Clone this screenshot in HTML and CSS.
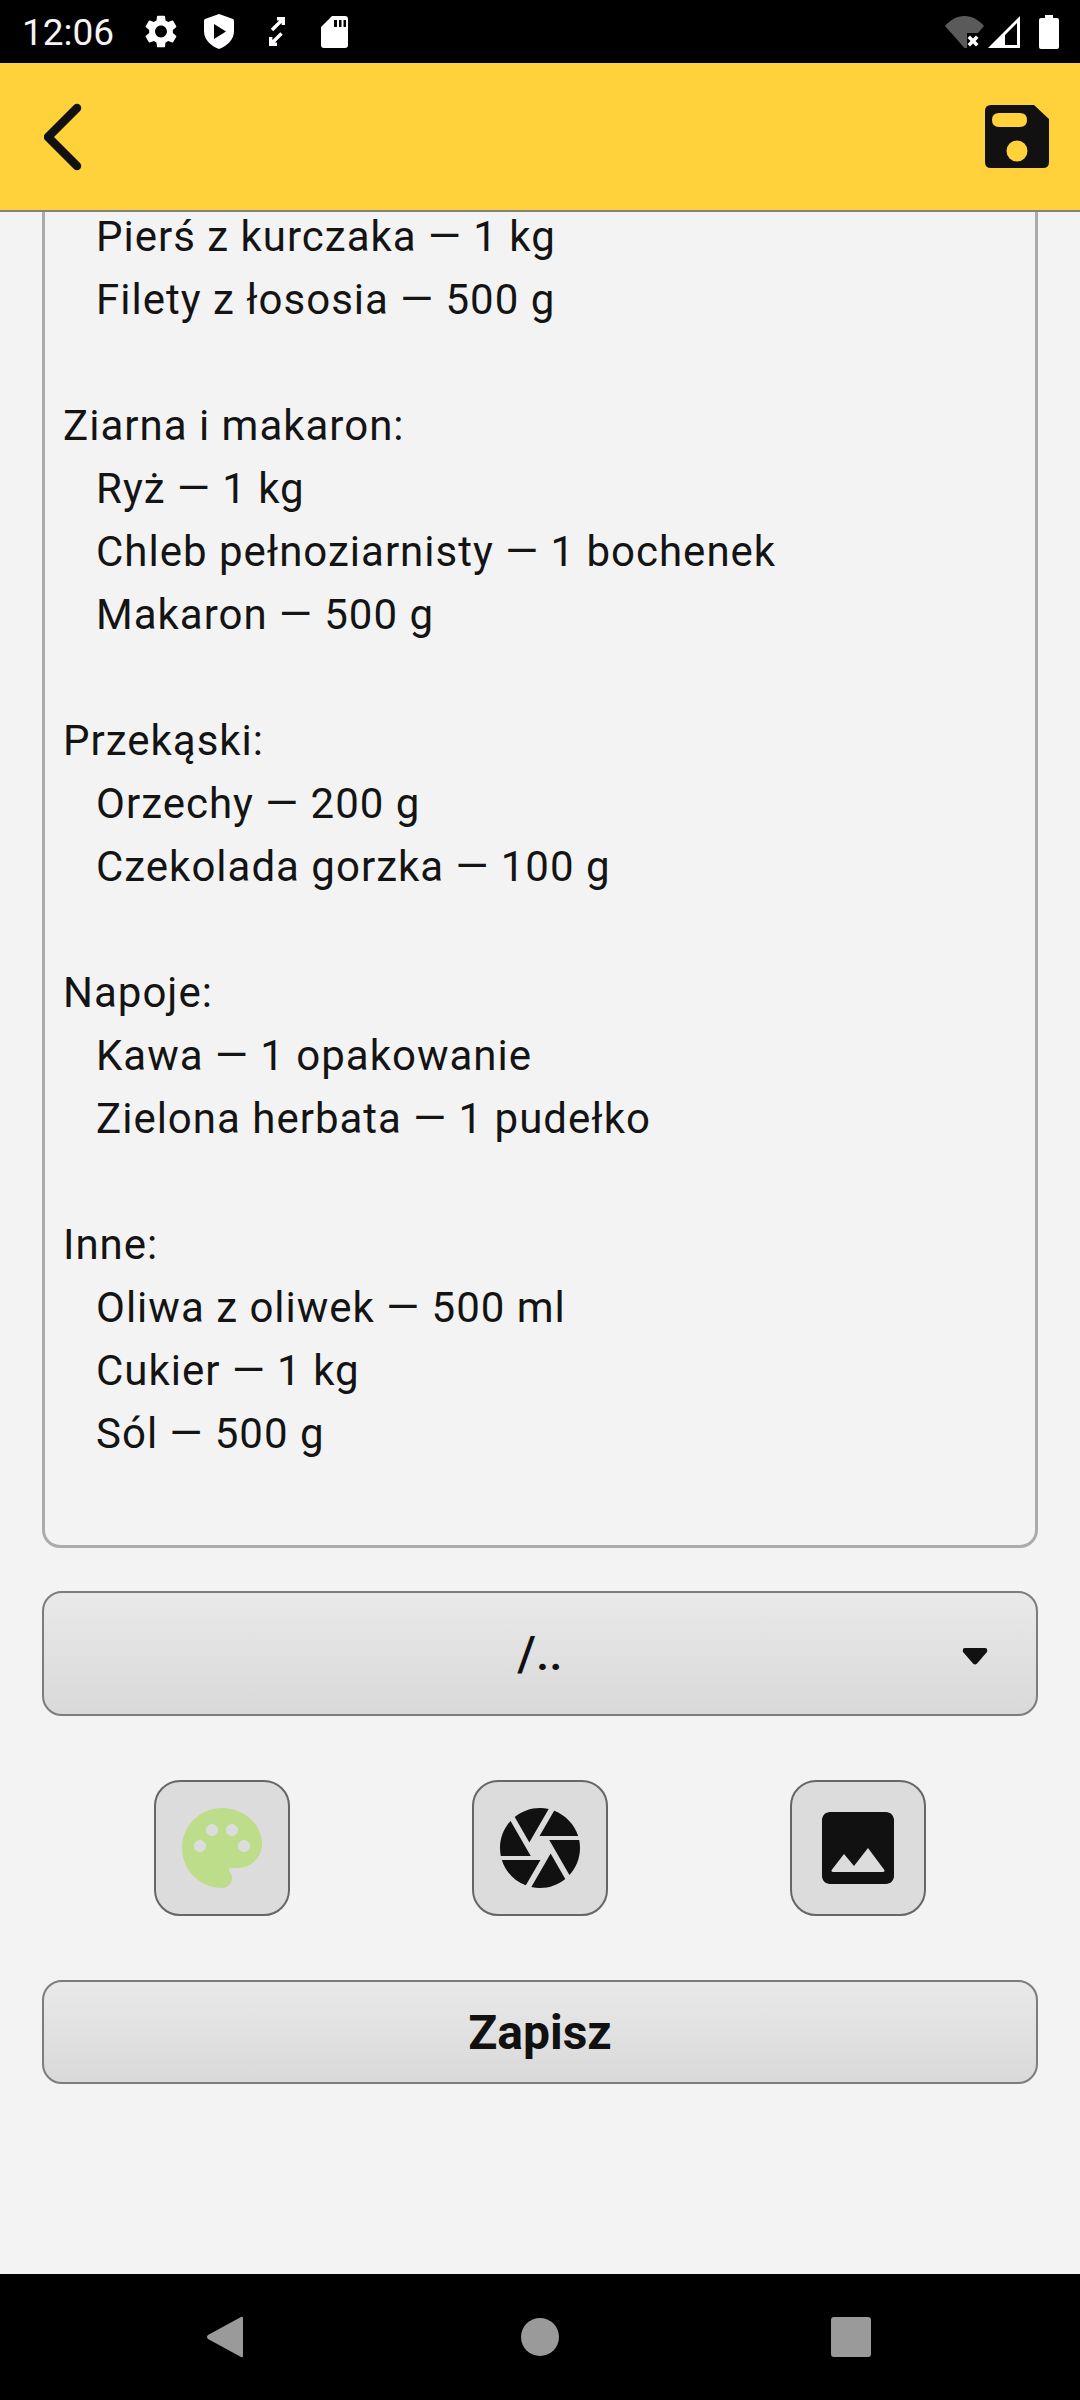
FILE: index.html
```html
<!DOCTYPE html>
<html lang="pl">
<head>
<meta charset="utf-8">
<title>Zapisz</title>
<link rel="stylesheet" href="styles.css">
</head>
<body>
<div class="screen">
  <header class="status">
    <span class="time">12:06</span>
    <svg class="st st-gear" viewBox="2.4 2 19.2 20"><path d="M19.14 12.94c.04-.3.06-.61.06-.94 0-.32-.02-.64-.07-.94l2.03-1.58c.18-.14.23-.41.12-.61l-1.92-3.32c-.12-.22-.37-.29-.59-.22l-2.39.96c-.5-.38-1.03-.7-1.62-.94L14.4 2.81c-.04-.24-.24-.41-.48-.41h-3.84c-.24 0-.43.17-.47.41L9.25 5.35c-.59.24-1.13.57-1.62.94l-2.39-.96c-.22-.08-.47 0-.59.22L2.74 8.87c-.12.21-.08.47.12.61l2.03 1.58c-.05.3-.09.63-.09.94s.02.64.07.94l-2.03 1.58c-.18.14-.23.41-.12.61l1.92 3.32c.12.22.37.29.59.22l2.39-.96c.5.38 1.03.7 1.62.94l.36 2.54c.05.24.24.41.48.41h3.84c.24 0 .44-.17.47-.41l.36-2.54c.59-.24 1.13-.56 1.62-.94l2.39.96c.22.08.47 0 .59-.22l1.92-3.32c.12-.22.07-.47-.12-.61l-2.01-1.58zM12 15.6c-1.98 0-3.6-1.62-3.6-3.6s1.62-3.6 3.6-3.6 3.6 1.62 3.6 3.6-1.62 3.6-3.6 3.6z"/></svg>
    <svg class="st st-shield" viewBox="0 0 30 35"><path fill-rule="evenodd" d="M15 0 L29 5 Q30 5.400 30 7 V17 C30 26 23 32 15 35 C7 32 0 26 0 17 V7 Q0 5.400 1 5 Z M10 10 V25 L22 17.500 Z"/></svg>
    <svg class="st st-arrows" viewBox="0 0 16 29"><path class="arrow-line" d="M8 1.700H14.300V8M14.300 1.700 3 13"/><path class="arrow-line" d="M1.700 20V27.300H8M1.700 27.300 12.500 16.500"/></svg>
    <svg class="st st-sd" viewBox="0 0 27 32"><path fill-rule="evenodd" d="M11 0H24Q27 0 27 3V29Q27 32 24 32H3Q0 32 0 29V11ZM13 4V11H16V4ZM18 4V11H20.500V4ZM22.500 4V11H25V4Z"/></svg>
    <span class="status-gap"></span>
    <svg class="st st-wifi" viewBox="0 0 39 32"><path class="dim" d="M19.500 32 0 10C5 4 12 0 19.500 0S34 4 39 10L33 17H22V32Z"/><path d="M25 19.500 28 22.500 31 19.500 33.500 22 30.500 25 33.500 28 31 30.500 28 27.500 25 30.500 22.500 28 25.500 25 22.500 22Z"/></svg>
    <svg class="st st-signal" viewBox="0 0 32 32"><path fill-rule="evenodd" d="M32 0V32H0ZM29 7 17 19V29H29Z"/></svg>
    <svg class="st st-battery" viewBox="0 0 20 34"><path d="M6 0H14V3H18Q20 3 20 5V32Q20 34 18 34H2Q0 34 0 32V5Q0 3 2 3H6Z"/></svg>
  </header>

  <nav class="appbar">
    <svg class="back" viewBox="0 0 40 70"><path d="M33 6 4 35 33 64"/></svg>
    <svg class="save" viewBox="0 0 64 64"><path fill-rule="evenodd" d="M6 0H49L64 14V57Q64 63 58 63H6Q0 63 0 57V6Q0 0 6 0ZM14 8Q7 8 7 15T14 22H35Q42 22 42 15T35 8ZM32 35.500A10.500 10.500 0 1 0 32 56.500 10.500 10.500 0 1 0 32 35.500Z"/></svg>
  </nav>

  <main class="content">
    <div class="note">
      <section class="group">
        <p class="item">Pierś z kurczaka — 1 kg</p>
        <p class="item">Filety z łososia — 500 g</p>
      </section>
      <section class="group">
        <p class="head">Ziarna i makaron:</p>
        <p class="item">Ryż — 1 kg</p>
        <p class="item">Chleb pełnoziarnisty — 1 bochenek</p>
        <p class="item">Makaron — 500 g</p>
      </section>
      <section class="group">
        <p class="head">Przekąski:</p>
        <p class="item">Orzechy — 200 g</p>
        <p class="item">Czekolada gorzka — 100 g</p>
      </section>
      <section class="group">
        <p class="head">Napoje:</p>
        <p class="item">Kawa — 1 opakowanie</p>
        <p class="item">Zielona herbata — 1 pudełko</p>
      </section>
      <section class="group">
        <p class="head">Inne:</p>
        <p class="item">Oliwa z oliwek — 500 ml</p>
        <p class="item">Cukier — 1 kg</p>
        <p class="item">Sól — 500 g</p>
      </section>
    </div>

    <div class="select">
      <span class="select-value">/..</span>
      <svg class="select-arrow" viewBox="0 0 26 17"><path d="M3 0H23Q26 0 25 4L15 15.500Q13 17.500 11 15.500L1 4Q0 0 3 0Z"/></svg>
    </div>

    <div class="tools">
      <div class="tool">
        <svg class="tool-icon" viewBox="0 0 24 24"><path class="palette" d="M12 2C6.490 2 2 6.490 2 12s4.490 10 10 10c1.380 0 2.500-1.120 2.500-2.500 0-.61-.23-1.200-.64-1.670-.08-.1-.13-.21-.13-.33 0-.28.22-.5.5-.5H16c3.310 0 6-2.690 6-6 0-4.960-4.490-9-10-9zm-5.500 11c-.83 0-1.500-.67-1.500-1.500S5.670 10 6.500 10s1.500.67 1.500 1.500S7.330 13 6.500 13zm3-4C8.670 9 8 8.330 8 7.500S8.670 6 9.500 6s1.500.67 1.500 1.500S10.330 9 9.500 9zm5 0c-.83 0-1.500-.67-1.500-1.500S13.670 6 14.500 6s1.500.67 1.500 1.500S15.330 9 14.500 9zm3 4c-.83 0-1.500-.67-1.500-1.500s.67-1.500 1.500-1.500 1.500.67 1.500 1.500-.67 1.500-1.500 1.500z"/></svg>
      </div>
      <div class="tool">
        <svg class="tool-icon" viewBox="0 0 24 24"><path d="M9.400 10.500l4.770-8.260C13.470 2.090 12.750 2 12 2c-2.400 0-4.600.85-6.320 2.250l3.660 6.350.06-.1zM21.540 9c-.92-2.920-3.150-5.260-6-6.340L11.880 9h9.660zm.26 1h-7.490l.29.5 4.760 8.250C21 16.970 22 14.610 22 12c0-.69-.07-1.350-.2-2zM8.540 12l-3.900-6.750C3.010 7.030 2 9.390 2 12c0 .69.07 1.350.2 2h7.490l-1.150-2zm-6.080 3c.92 2.920 3.150 5.260 6 6.340L12.120 15H2.460zm11.270 0l-3.900 6.760c.7.15 1.420.24 2.170.24 2.400 0 4.600-.85 6.320-2.250l-3.660-6.350-.93 1.600z"/></svg>
      </div>
      <div class="tool">
        <svg class="tool-icon" viewBox="0 0 24 24"><path fill-rule="evenodd" d="M21 19V5c0-1.100-.9-2-2-2H5c-1.100 0-2 .9-2 2v14c0 1.100.9 2 2 2h14c1.100 0 2-.9 2-2zM8.500 13.500l2.500 3.010L14.500 12l4 5.400q.4.6-.3.6H5.800q-.7 0-.3-.6z"/></svg>
      </div>
    </div>

    <button class="submit" type="button">Zapisz</button>
  </main>

  <footer class="navbar">
    <svg class="nav-back" viewBox="0 0 36 42"><path d="M36 2V40Q36 42 34 41L1 23Q-1 21 1 19L34 1Q36 0 36 2Z"/></svg>
    <svg class="nav-home" viewBox="0 0 38 38"><circle cx="19" cy="19" r="19"/></svg>
    <svg class="nav-recent" viewBox="0 0 40 40"><rect width="40" height="40" rx="3"/></svg>
  </footer>
</div>
</body>
</html>
```

FILE: styles.css
```css
* { box-sizing: border-box; }

html, body {
  margin: 0;
  padding: 0;
  background: #f3f3f3;
}

.screen {
  width: 1080px;
  height: 2400px;
  display: flex;
  flex-direction: column;
  overflow: hidden;
  font-family: Roboto, "Noto Sans", sans-serif;
  color: #111;
}

/* status bar */
.status {
  height: 63px;
  flex: none;
  background: #000;
  display: flex;
  align-items: center;
  padding-left: 22px;
  padding-right: 21px;
  color: #fff;
}
.time {
  font-size: 37px;
  line-height: 66px;
  height: 63px;
  width: 123px;
  flex: none;
  color: #f4f4f4;
}
.st { fill: #fff; flex: none; display: block; }
.st-gear { width: 32px; height: 33px; margin-right: 27px; }
.st-shield { width: 30px; height: 35px; margin-right: 35px; }
.st-arrows { width: 16px; height: 29px; margin-right: 36px; }
.arrow-line { fill: none; stroke: #fff; stroke-width: 3.400; }
.st-sd { width: 27px; height: 32px; }
.status-gap { flex: 1; }
.st-wifi { width: 39px; height: 32px; margin-right: 4px; }
.st-wifi .dim { fill: #5a5a5a; }
.st-signal { width: 32px; height: 32px; margin-right: 19px; }
.st-battery { width: 20px; height: 34px; }

/* app bar */
.appbar {
  height: 149px;
  flex: none;
  background: #ffd23c;
  border-bottom: 2px solid #828282;
  display: flex;
  align-items: center;
  justify-content: space-between;
  padding-left: 44px;
  padding-right: 31px;
}
.back {
  width: 40px;
  height: 70px;
  fill: none;
  stroke: #111;
  stroke-width: 8.500;
  stroke-linecap: round;
  stroke-linejoin: round;
}
.save { width: 64px; height: 64px; fill: #111; }

/* scrolled content, pinned to the bottom of its viewport */
.content {
  flex: 1;
  min-height: 0;
  overflow: hidden;
  display: flex;
  flex-direction: column;
  justify-content: flex-end;
  padding: 0 42px 190px;
}
.note {
  flex: none;
  border: 3px solid #ababab;
  border-radius: 18px;
  padding: 40px 18px 80px;
  font-size: 42px;
  letter-spacing: 1px;
  line-height: 63px;
  color: #141414;
  margin-bottom: 43px;
  display: flex;
  flex-direction: column;
  gap: 63px;
}
.head, .item { margin: 0; }
.item { padding-left: 33px; }

.select {
  flex: none;
  height: 125px;
  border: 2px solid #7c7c7c;
  border-radius: 20px;
  background: linear-gradient(#e9e9e9, #d9d9d9);
  display: flex;
  align-items: center;
  justify-content: center;
  position: relative;
  margin-bottom: 64px;
}
.select-value {
  font-size: 48px;
  font-weight: 500;
  line-height: 60px;
}
.select-arrow {
  position: absolute;
  right: 48px;
  top: 55px;
  width: 26px;
  height: 17px;
  fill: #111;
}
.tools {
  flex: none;
  display: flex;
  justify-content: space-between;
  padding: 0 112px;
  margin-bottom: 64px;
}
.tool {
  width: 136px;
  height: 136px;
  border: 2px solid #666;
  border-radius: 26px;
  background: #dcdcdc;
  display: flex;
  align-items: center;
  justify-content: center;
}
.tool-icon { width: 96px; height: 96px; fill: #111; }
.tool-icon .palette { fill: #bddd8b; }
.submit {
  flex: none;
  height: 104px;
  width: 100%;
  border: 2px solid #7c7c7c;
  border-radius: 20px;
  background: linear-gradient(#e9e9e9, #d9d9d9);
  font-family: inherit;
  font-size: 48px;
  font-weight: 700;
  color: #111;
  padding: 0;
}

/* navigation bar */
.navbar {
  height: 126px;
  flex: none;
  background: #000;
  display: flex;
  align-items: center;
  padding-left: 207px;
  fill: #9a9a9a;
}
.nav-back { width: 36px; height: 42px; margin-right: 278px; }
.nav-home { width: 38px; height: 38px; margin-right: 272px; }
.nav-recent { width: 40px; height: 40px; }
```
